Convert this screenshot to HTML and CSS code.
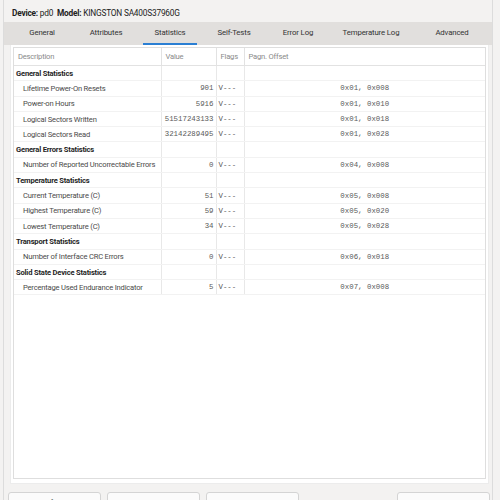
FILE: index.html
```html
<!DOCTYPE html>
<html lang="en">
<head>
    <meta charset="UTF-8">
    <title>Device Statistics</title>
    <link rel="stylesheet" href="styles.css">
</head>
<body>
    <div class="window">
        <div class="device-line">
            <strong>Device:</strong> pd0&nbsp; <strong>Model:</strong> KINGSTON SA400S37960G
        </div>

        <div class="tabs">
            <div class="tab">General</div>
            <div class="tab">Attributes</div>
            <div class="tab active">Statistics</div>
            <div class="tab">Self-Tests</div>
            <div class="tab">Error Log</div>
            <div class="tab wide">Temperature Log</div>
            <div class="tab">Advanced</div>
        </div>

        <div class="panel">
            <div class="grid">
                <table class="stats">
                    <colgroup>
                        <col class="col-desc">
                        <col class="col-value">
                        <col class="col-flags">
                        <col>
                    </colgroup>
                    <thead>
                        <tr>
                            <th>Description</th>
                            <th>Value</th>
                            <th>Flags</th>
                            <th>Pagn. Offset</th>
                        </tr>
                    </thead>
                    <tbody>
                        <tr class="group"><td>General Statistics</td><td></td><td></td><td></td></tr>
                        <tr><td>Lifetime Power-On Resets</td><td class="num">901</td><td class="mono">V---</td><td class="offset">0x01, 0x008</td></tr>
                        <tr><td>Power-on Hours</td><td class="num">5916</td><td class="mono">V---</td><td class="offset">0x01, 0x010</td></tr>
                        <tr><td>Logical Sectors Written</td><td class="num">51517243133</td><td class="mono">V---</td><td class="offset">0x01, 0x018</td></tr>
                        <tr><td>Logical Sectors Read</td><td class="num">32142289495</td><td class="mono">V---</td><td class="offset">0x01, 0x028</td></tr>
                        <tr class="group"><td>General Errors Statistics</td><td></td><td></td><td></td></tr>
                        <tr><td>Number of Reported Uncorrectable Errors</td><td class="num">0</td><td class="mono">V---</td><td class="offset">0x04, 0x008</td></tr>
                        <tr class="group"><td>Temperature Statistics</td><td></td><td></td><td></td></tr>
                        <tr><td>Current Temperature (C)</td><td class="num">51</td><td class="mono">V---</td><td class="offset">0x05, 0x008</td></tr>
                        <tr><td>Highest Temperature (C)</td><td class="num">59</td><td class="mono">V---</td><td class="offset">0x05, 0x020</td></tr>
                        <tr><td>Lowest Temperature (C)</td><td class="num">34</td><td class="mono">V---</td><td class="offset">0x05, 0x028</td></tr>
                        <tr class="group"><td>Transport Statistics</td><td></td><td></td><td></td></tr>
                        <tr><td>Number of Interface CRC Errors</td><td class="num">0</td><td class="mono">V---</td><td class="offset">0x06, 0x018</td></tr>
                        <tr class="group"><td>Solid State Device Statistics</td><td></td><td></td><td></td></tr>
                        <tr><td>Percentage Used Endurance Indicator</td><td class="num">5</td><td class="mono">V---</td><td class="offset">0x07, 0x008</td></tr>
                    </tbody>
                </table>
            </div>
        </div>

        <div class="buttons">
            <button>Refresh</button>
            <button>View Output</button>
            <button>Save As...</button>
            <span class="spacer"></span>
            <button>Close</button>
        </div>
    </div>
</body>
</html>
```

FILE: styles.css
```css
html, body {
    margin: 0;
    padding: 0;
}
body {
    width: 500px;
    height: 500px;
    overflow: hidden;
    background: #f3f2f1;
    font-family: Roboto, Arial, sans-serif;
    font-size: 7.6px;
    letter-spacing: -0.2px;
    color: #333;
}
.window {
    margin-left: 3px;
    width: 490px;
    height: 500px;
    border-left: 1px solid #dcdcdc;
    border-right: 1px solid #dcdcdc;
    box-sizing: border-box;
}
.device-line {
    height: 22px;
    line-height: 26px;
    padding-left: 8px;
    font-size: 8.3px;
    color: #222;
}
.device-line strong {
    font-weight: 700;
}

/* tab strip */
.tabs {
    display: flex;
    height: 23px;
    background: #e1dfdd;
    padding-left: 6px;
    font-size: 7.8px;
    letter-spacing: -0.15px;
}
.tab {
    width: 64px;
    text-align: center;
    line-height: 22px;
    color: #333;
    box-sizing: border-box;
}
.tab.wide {
    width: 82px;
}
.tab:last-child {
    flex: 1;
}
.tab.active {
    border-bottom: 2px solid #2b7fd3;
    margin: 0 5px;
    width: 54px;
}

/* white page under the tabs */
.panel {
    background: #fff;
    margin: 0 3px 0 6px;
    padding: 2px 2px 4px 2px;
    border: 1px solid #ececec;
    border-top: none;
}
.grid {
    height: 430px;
    border: 1px solid #dedede;
    background: #fff;
}
.stats {
    width: 100%;
    border-collapse: collapse;
    table-layout: fixed;
}
.col-desc { width: 147px; }
.col-value { width: 55px; }
.col-flags { width: 28px; }
.stats th {
    height: 17px;
    padding: 0 0 0 4px;
    text-align: left;
    font-weight: normal;
    color: #8a8a8a;
    border-bottom: 1px solid #e2e2e2;
    border-right: 1px solid #e2e2e2;
}
.stats th:last-child {
    border-right: none;
}
.stats td {
    height: 14.3px;
    padding: 0;
    border-bottom: 1px solid #f2f2f2;
    border-right: 1px solid #e8e8e8;
    white-space: nowrap;
    overflow: hidden;
    color: #4a4a4a;
}
.stats td:first-child {
    padding-left: 9px;
}
.stats td:last-child {
    border-right: none;
}
.stats tr.group td:first-child {
    padding-left: 2px;
    font-weight: 700;
    color: #1f1f1f;
}
.num, .mono, .offset {
    font-family: "Liberation Mono", "Courier New", monospace;
    font-size: 7.4px;
    letter-spacing: 0;
}
.stats td.num {
    text-align: right;
    padding-right: 2px;
    color: #5a5a5a;
}
.stats td.mono {
    padding-left: 2px;
    color: #5a5a5a;
}
.stats td.offset {
    text-align: center;
    color: #5a5a5a;
}

/* dialog buttons */
.buttons {
    display: flex;
    gap: 6px;
    padding: 8px 0 0 4px;
}
.buttons button {
    width: 93px;
    height: 20px;
    padding: 0;
    background: #fbfbfb;
    border: 1px solid #d4d4d4;
    border-radius: 3px;
    font-family: inherit;
    font-size: 7.8px;
    letter-spacing: -0.15px;
    color: #222;
}
.spacer {
    flex: 1;
}
.buttons button:last-child {
    margin-right: 2px;
}
```
